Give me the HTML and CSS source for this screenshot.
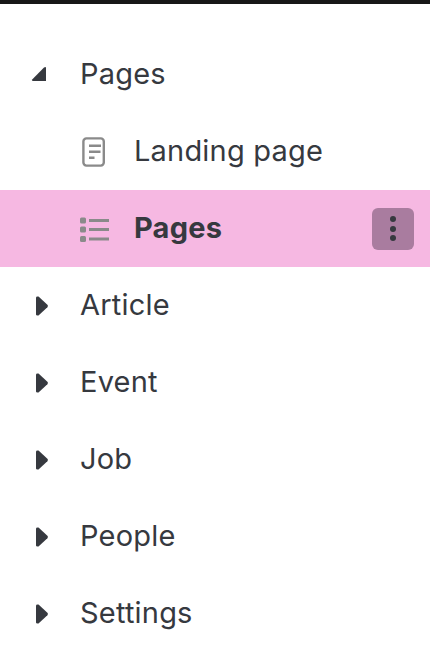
FILE: index.html
```html
<!DOCTYPE html>
<html>
<head>
    <title>Pages</title>
    <link rel="stylesheet" href="styles.css">
</head>
<body>
    <ul class="tree">
        <li class="row">
            <svg class="arrow" width="18" height="18" viewBox="0 0 18 18"><path d="M16 2V15H3Q1.2 15 2.2 13.6L14 1.6Q16 0.2 16 2Z" fill="#36393f"/></svg>
            <span class="label">Pages</span>
        </li>
        <li class="row child">
            <svg class="icon" width="30" height="30" viewBox="0 0 30 30" fill="none" stroke="#8a8a8a" stroke-width="2.4"><rect x="3.4" y="1.4" width="20.4" height="27.2" rx="3"/><path d="M9 8.7H21M9 14.7H20.5M9 20.7H14.5" stroke-width="2.6"/></svg>
            <span class="label">Landing page</span>
        </li>
        <li class="row child active">
            <svg class="icon" width="30" height="30" viewBox="0 0 30 30" fill="#8a8a8a"><rect x="0" y="3.5" width="6" height="6" rx="1.5"/><rect x="0" y="12.5" width="6" height="6" rx="1.5"/><rect x="0" y="22" width="6" height="6" rx="1.5"/><rect x="9" y="5" width="20" height="3"/><rect x="9" y="14" width="20" height="3"/><rect x="9" y="23.5" width="20" height="3"/></svg>
            <span class="label">Pages</span>
            <button class="more"><span class="dot"></span><span class="dot"></span><span class="dot"></span></button>
        </li>
        <li class="row">
            <svg class="arrow" width="18" height="20" viewBox="0 0 18 20"><path d="M6 1.5Q6 0.5 7.5 0.5H8.5L17.4 8.8Q18.4 10 17.4 11.2L8.5 19.5H7.5Q6 19.5 6 18.5Z" fill="#36393f"/></svg>
            <span class="label">Article</span>
        </li>
        <li class="row">
            <svg class="arrow" width="18" height="20" viewBox="0 0 18 20"><path d="M6 1.5Q6 0.5 7.5 0.5H8.5L17.4 8.8Q18.4 10 17.4 11.2L8.5 19.5H7.5Q6 19.5 6 18.5Z" fill="#36393f"/></svg>
            <span class="label">Event</span>
        </li>
        <li class="row">
            <svg class="arrow" width="18" height="20" viewBox="0 0 18 20"><path d="M6 1.5Q6 0.5 7.5 0.5H8.5L17.4 8.8Q18.4 10 17.4 11.2L8.5 19.5H7.5Q6 19.5 6 18.5Z" fill="#36393f"/></svg>
            <span class="label">Job</span>
        </li>
        <li class="row">
            <svg class="arrow" width="18" height="20" viewBox="0 0 18 20"><path d="M6 1.5Q6 0.5 7.5 0.5H8.5L17.4 8.8Q18.4 10 17.4 11.2L8.5 19.5H7.5Q6 19.5 6 18.5Z" fill="#36393f"/></svg>
            <span class="label">People</span>
        </li>
        <li class="row">
            <svg class="arrow" width="18" height="20" viewBox="0 0 18 20"><path d="M6 1.5Q6 0.5 7.5 0.5H8.5L17.4 8.8Q18.4 10 17.4 11.2L8.5 19.5H7.5Q6 19.5 6 18.5Z" fill="#36393f"/></svg>
            <span class="label">Settings</span>
        </li>
    </ul>
</body>
</html>
```
FILE: styles.css
```css
html, body {
    height: 100%;
}

body {
    font-family: Inter, "Liberation Sans", sans-serif;
    background-color: #fff;
    color: #36393f;
    margin: 0;
    overflow: hidden;
    border-top: 4px solid #181818;
    box-sizing: border-box;
}

.tree {
    list-style: none;
    margin: 0;
    padding: 32px 0 0;
}

.row {
    display: flex;
    align-items: center;
    height: 77px;
    padding-left: 30px;
    font-size: 29px;
    letter-spacing: 0.2px;
    box-sizing: border-box;
}

.label {
    padding-bottom: 2px;
}

.arrow {
    margin-right: 32px;
    flex: none;
}

.child {
    padding-left: 80px;
}

.icon {
    margin-right: 24px;
    flex: none;
}

.active {
    background-color: #f6b8e2;
    padding-right: 16px;
}

.active .label {
    font-weight: 700;
}

.more {
    margin-left: auto;
    width: 42px;
    height: 42px;
    border: none;
    border-radius: 6px;
    background-color: #a97c9f;
    padding: 0;
    display: flex;
    flex-direction: column;
    align-items: center;
    justify-content: center;
    gap: 3.5px;
}

.dot {
    width: 6px;
    height: 6px;
    border-radius: 50%;
    background-color: #36393f;
}
```
